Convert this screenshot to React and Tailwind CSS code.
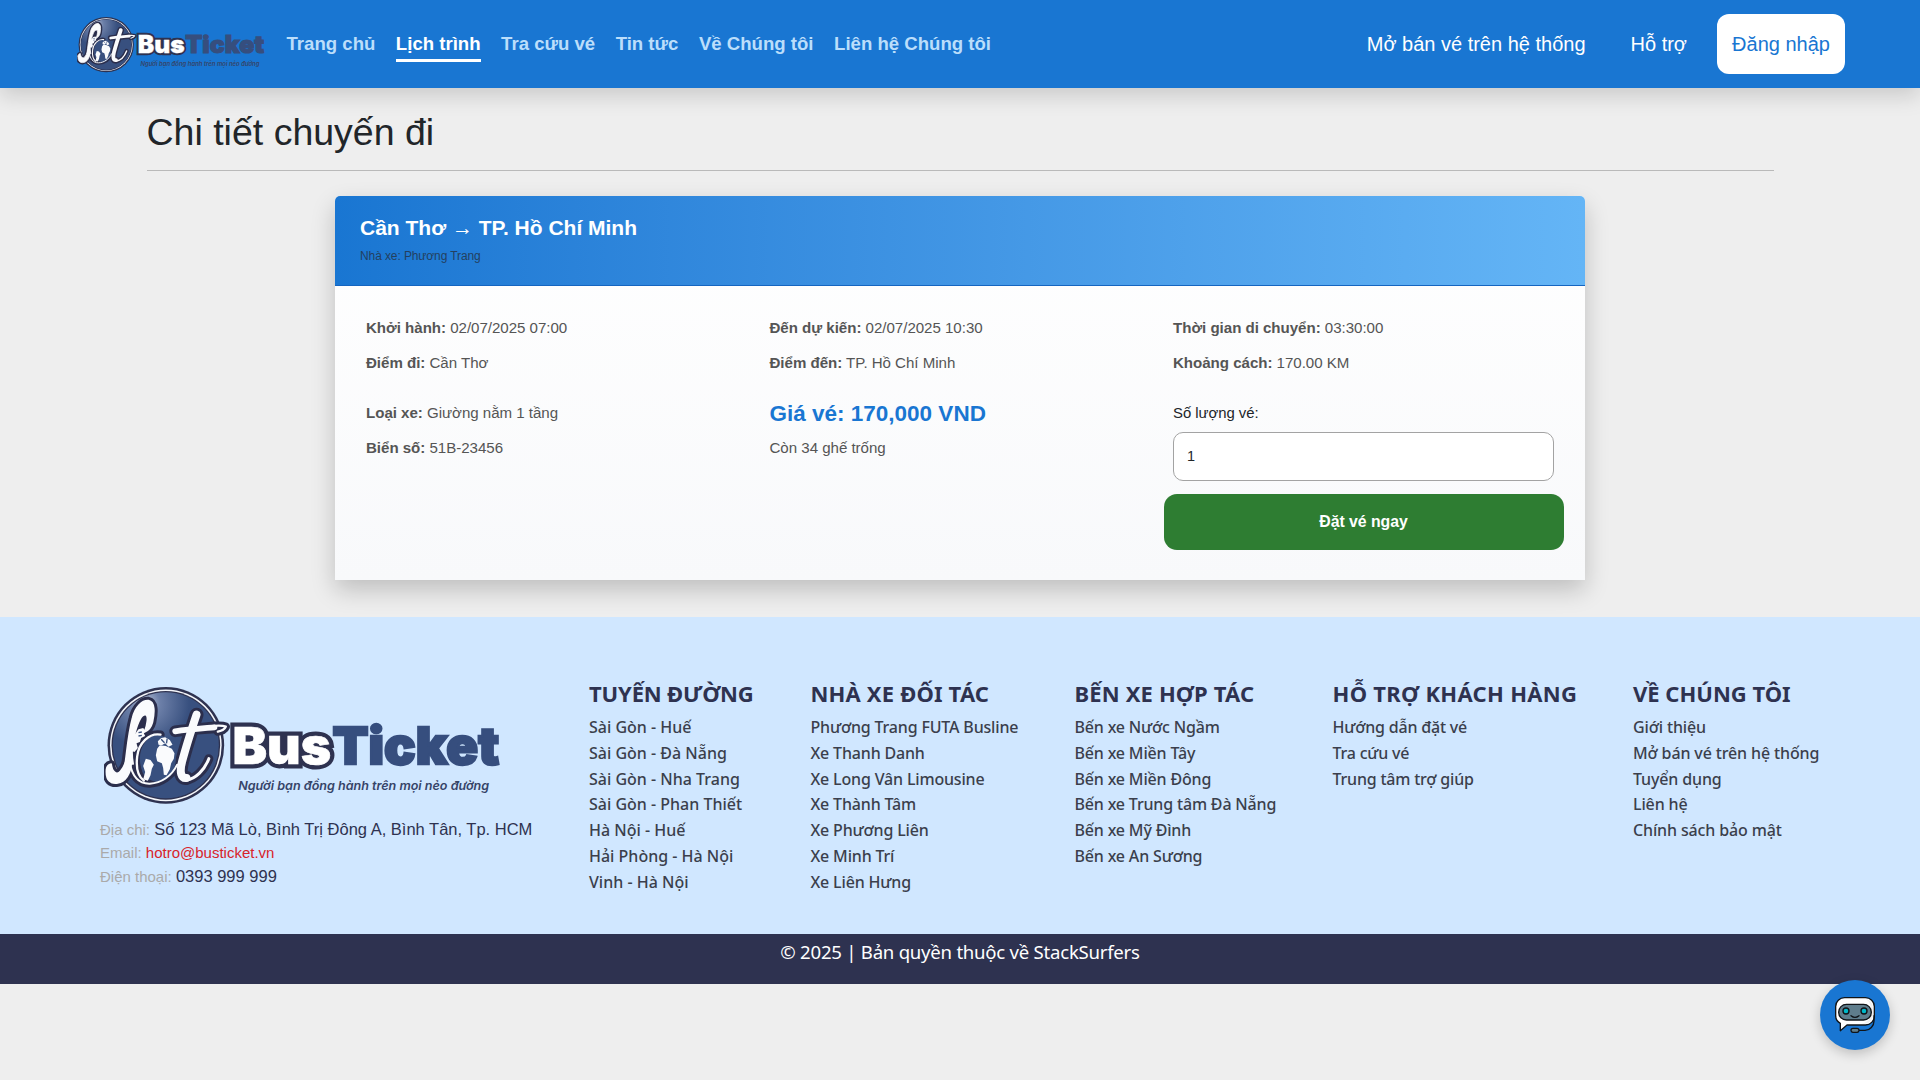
import React from "react";

const NAV = ["Trang chủ", "Lịch trình", "Tra cứu vé", "Tin tức", "Về Chúng tôi", "Liên hệ Chúng tôi"];

const COLUMNS = [
  {
    title: "TUYẾN ĐƯỜNG",
    width: "w-[221.5px]",
    head: "tracking-[-0.15px]",
    body: "tracking-[0px]",
    items: ["Sài Gòn - Huế", "Sài Gòn - Đà Nẵng", "Sài Gòn - Nha Trang", "Sài Gòn - Phan Thiết", "Hà Nội - Huế", "Hải Phòng - Hà Nội", "Vinh - Hà Nội"],
  },
  {
    title: "NHÀ XE ĐỐI TÁC",
    width: "w-[264px]",
    head: "tracking-[0.17px]",
    body: "tracking-[-0.17px]",
    items: ["Phương Trang FUTA Busline", "Xe Thanh Danh", "Xe Long Vân Limousine", "Xe Thành Tâm", "Xe Phương Liên", "Xe Minh Trí", "Xe Liên Hưng"],
  },
  {
    title: "BẾN XE HỢP TÁC",
    width: "w-[258px]",
    head: "tracking-[0.15px]",
    body: "tracking-[-0.17px]",
    items: ["Bến xe Nước Ngầm", "Bến xe Miền Tây", "Bến xe Miền Đông", "Bến xe Trung tâm Đà Nẵng", "Bến xe Mỹ Đình", "Bến xe An Sương"],
  },
  {
    title: "HỖ TRỢ KHÁCH HÀNG",
    width: "w-[300.5px]",
    head: "tracking-[0.3px]",
    body: "tracking-[-0.2px]",
    items: ["Hướng dẫn đặt vé", "Tra cứu vé", "Trung tâm trợ giúp"],
  },
  {
    title: "VỀ CHÚNG TÔI",
    width: "w-[200px]",
    head: "tracking-[0px]",
    body: "tracking-[-0.13px]",
    items: ["Giới thiệu", "Mở bán vé trên hệ thống", "Tuyển dụng", "Liên hệ", "Chính sách bảo mật"],
  },
];

function Script({ stroke, extra }) {
  const p = { fill: "none", stroke, strokeLinecap: "round", strokeLinejoin: "round" };
  return (
    <g>
      {/* hook and tall loop */}
      <path {...p} strokeWidth={5 + extra} fill={stroke} d="M50 300 C47 335 64 344 84 341 C106 338 122 314 124 284 L118 236 C114 262 104 292 92 306 C80 320 66 306 64 284 C54 286 51 292 50 300 Z" />
      <path {...p} strokeWidth={5 + extra} fill={stroke} d="M106 284 C112 240 116 190 128 146 C136 112 158 92 176 94 C196 98 194 130 188 158 C184 174 174 184 164 188 C172 168 178 136 166 136 C152 136 144 160 136 188 C126 222 124 254 130 284 Z" />
      {/* ring in front of the globe */}
      <path {...p} strokeWidth={6 + extra} d="M118 270 C124 316 144 344 180 343 C214 342 246 320 262 286" />
      <path {...p} strokeWidth={7 + extra} d="M212 196 C178 190 146 222 142 262 C138 296 146 322 162 334" />
      {/* letter t */}
      <path {...p} strokeWidth={24 + extra} d="M320 136 C306 178 290 226 277 276 C268 310 274 328 290 326" />
      <path {...p} strokeWidth={9 + extra} d="M290 332 C318 328 344 302 357 268" />
      <path {...p} strokeWidth={17 + extra} d="M256 186 C296 180 340 177 374 174" />
      <path {...p} strokeWidth={7 + extra} d="M360 171 C384 168 398 168 408 172 C404 182 396 184 384 187" />
    </g>
  );
}

function Logo({ id, className }) {
  return (
    <svg viewBox="43 47 1190 360" className={className} aria-label="BusTicket">
      <defs>
        <radialGradient id={id} cx="0.3" cy="0.1" r="0.42">
          <stop offset="0" stopColor="#b9c3d8" />
          <stop offset="0.35" stopColor="#6c7fa8" />
          <stop offset="1" stopColor="#38507f" />
        </radialGradient>
      </defs>
      <circle cx="228" cy="228" r="175" fill="#2e3250" />
      <circle cx="228" cy="228" r="167.5" fill="#f4f6fa" />
      <circle cx="228" cy="228" r="163" fill="#2e3250" />
      <circle cx="228" cy="228" r="159" fill={`url(#${id})`} />
      <Script stroke="#2b2e4c" extra={18} />
      <path fill="#2b2e4c" d="M128 284 C128 220 142 160 170 136 C180 160 166 190 166 200 C150 220 140 250 140 300 Z" />
      <ellipse cx="204" cy="268" rx="54" ry="70" fill="#38507f" />
      <g fill="#fafbfd">
        <path d="M134 196 L146 180 L160 176 L168 186 L162 192 L166 200 L154 206 L150 218 L140 222 L144 236 L134 248 L124 244 L122 216 Z" />
        <path d="M168 268 L182 272 L192 286 L186 298 L182 318 L174 334 L160 330 L166 308 L160 290 Z" />
        <path d="M202 238 L210 228 L228 230 L246 238 L254 252 L252 268 L244 282 L240 300 L230 318 L222 316 L220 296 L216 282 L202 276 L198 258 Z" />
        <path d="M204 216 L214 206 L226 204 L240 212 L248 226 L236 232 L226 222 L216 228 L206 226 Z" />
      </g>
      <path d="M214 210 L224 220 M232 208 L230 222 M146 190 L156 188 M146 200 L156 198" stroke="#38507f" strokeWidth="4" />
      <Script stroke="#fafbfd" extra={0} />
      <g fontFamily="Inter, 'Liberation Sans', sans-serif">
        <text x="428" y="283" fontSize="152" fontWeight="900" textLength="296" lengthAdjust="spacingAndGlyphs" fill="#2e3250" stroke="#2e3250" strokeWidth="27" strokeLinejoin="miter">Bus</text>
        <text x="428" y="283" fontSize="152" fontWeight="900" textLength="296" lengthAdjust="spacingAndGlyphs" fill="#ffffff" stroke="#ffffff" strokeWidth="2">Bus</text>
        <text x="728" y="283" fontSize="152" fontWeight="900" textLength="500" lengthAdjust="spacingAndGlyphs" fill="#364e7e" stroke="#364e7e" strokeWidth="7">Ticket</text>
        <text x="445" y="361" fontSize="37" fontWeight="600" fontStyle="italic" textLength="753" lengthAdjust="spacingAndGlyphs" fill="#364468">Người bạn đồng hành trên mọi nẻo đường</text>
      </g>
    </svg>
  );
}

function Header() {
  return (
    <header className="relative z-10 flex h-[88px] items-center bg-[#1976d2] pr-[75px] pl-[77px] shadow-[0_8px_20px_rgba(0,0,0,0.15)]">
      <Logo id="logo-shine-top" className="h-[57px] w-[188px] shrink-0" />
      <nav className="ml-[21.5px] flex gap-[20.5px] pb-px text-[18.6px] leading-7 font-bold text-[#bbdefb]">
        {NAV.map((label) =>
          label === "Lịch trình" ? (
            <a key={label} className="relative text-white">
              {label}
              <span className="absolute inset-x-0 top-[29px] h-[3px] bg-white" />
            </a>
          ) : (
            <a key={label}>{label}</a>
          )
        )}
      </nav>
      <div className="ml-auto flex items-center text-[20px] leading-7 text-white">
        <a className="mr-[45px]">Mở bán vé trên hệ thống</a>
        <a className="mr-[30px]">Hỗ trợ</a>
        <button className="h-[60px] w-[128px] rounded-[12px] bg-white text-[#1976d2]">Đăng nhập</button>
      </div>
    </header>
  );
}

function Info({ label, children }) {
  return (
    <p>
      <b>{label}</b> {children}
    </p>
  );
}

function TripCard() {
  return (
    <section className="mx-auto mt-[25px] h-[384px] w-[1250px] rounded-t-[5px] bg-linear-to-b from-white to-[#f8f9fb] shadow-[0_10px_25px_rgba(0,0,0,0.2)]">
      <div className="h-[90px] rounded-t-[5px] border-b border-[#1565c0] bg-linear-to-r from-[#1976d2] to-[#64b5f6] px-[25px] pt-[17px]">
        <h2 className="text-[21px] leading-[30px] font-bold text-white">Cần Thơ → TP. Hồ Chí Minh</h2>
        <p className="mt-[4px] text-[12px] leading-[18px] tracking-[-0.1px] text-[#23405f]">Nhà xe: Phương Trang</p>
      </div>
      <div className="grid grid-cols-[403.5px_403.5px_381px] pt-[23.5px] pl-[31px] text-[15.1px] leading-[35px] tracking-[-0.03px] text-[#555]">
        <div>
          <Info label="Khởi hành:">02/07/2025 07:00</Info>
          <Info label="Điểm đi:">Cần Thơ</Info>
        </div>
        <div>
          <Info label="Đến dự kiến:">02/07/2025 10:30</Info>
          <Info label="Điểm đến:">TP. Hồ Chí Minh</Info>
        </div>
        <div>
          <Info label="Thời gian di chuyển:">03:30:00</Info>
          <Info label="Khoảng cách:">170.00 KM</Info>
        </div>
        <div className="pt-[15px]">
          <Info label="Loại xe:">Giường nằm 1 tầng</Info>
          <Info label="Biển số:">51B-23456</Info>
        </div>
        <div className="pt-[15px]">
          <p className="pt-[3px] text-[22.5px] leading-[32px] font-bold tracking-normal text-[#1976d2]">Giá vé: 170,000 VND</p>
          <p>Còn 34 ghế trống</p>
        </div>
        <div className="pt-[15px]">
          <label className="block pt-px text-[14.9px] leading-[34px] text-[#212529]">Số lượng vé:</label>
          <div className="mt-[2.5px] h-[49px] w-[381px] rounded-[10px] border border-[#a3a3a3] bg-white px-[13px] text-[14.5px] leading-[47px] text-[#212529]">1</div>
          <button className="mt-[13px] -ml-[9.5px] block h-[56px] w-[400px] rounded-[13px] bg-[#2e7d32] text-center text-[15.8px] leading-[52px] font-bold text-white">Đặt vé ngay</button>
        </div>
      </div>
    </section>
  );
}

function Footer() {
  return (
    <footer>
      <div className="flex h-[317px] bg-[#d0e7ff] pl-[100px]">
        <div className="w-[489px] pt-[68px] text-[16.5px] leading-[23.5px] text-[#2e3250]">
          <Logo id="logo-shine-foot" className="ml-[4px] h-[120px] w-[397px]" />
          <p className="mt-[12.5px]"><span className="text-[15px] text-[#aaa]">Địa chỉ: </span>Số 123 Mã Lò, Bình Trị Đông A, Bình Tân, Tp. HCM</p>
          <p className="text-[15px] text-[#d8232a]"><span className="text-[#aaa]">Email: </span>hotro@busticket.vn</p>
          <p><span className="text-[15px] text-[#aaa]">Điện thoại: </span>0393 999 999</p>
        </div>
        <div className="flex pt-[62px] font-['Noto_Sans',sans-serif]">
          {COLUMNS.map((c) => (
            <div key={c.title} className={c.width}>
              <h3 className={`text-[22px] leading-7 font-bold whitespace-nowrap text-[#2e3250] ${c.head}`}>{c.title}</h3>
              <ul className={`mt-[8px] text-[16px] leading-[25.8px] font-medium whitespace-nowrap text-[#3b3f4c] ${c.body}`}>
                {c.items.map((t) => (
                  <li key={t}>{t}</li>
                ))}
              </ul>
            </div>
          ))}
        </div>
      </div>
      <div className="h-[50px] bg-[#2e3250] pt-[4px] text-center font-['Noto_Sans',sans-serif] text-[18.6px] leading-[28px] tracking-[-0.25px] text-white">
        © 2025 | Bản quyền thuộc về StackSurfers
      </div>
    </footer>
  );
}

function ChatButton() {
  return (
    <button className="fixed right-[30px] bottom-[30px] z-20 flex size-[70px] items-center justify-center rounded-full bg-[#1976d2] shadow-[0_4px_12px_rgba(0,0,0,0.2)]">
      <svg viewBox="0 0 120 110" className="h-[36.7px] w-[40px]" fill="none" stroke="#101418" strokeWidth="4" strokeLinejoin="round" strokeLinecap="round">
        <path fill="#fff" d="M30 2 H90 A27 27 0 0 1 118 30 V54 A27 27 0 0 1 90 84 H36 L16 101 V79 A27 27 0 0 1 2 54 V30 A27 27 0 0 1 30 2 Z" />
        <path fill="#f0f0f0" stroke="none" d="M88 6 A26 26 0 0 1 114 32 V54 A26 26 0 0 1 88 80 H78 C96 76 106 66 106 50 V30 C106 16 98 8 88 6 Z" />
        <rect x="11" y="22" width="98" height="47" rx="23.5" fill="#5f7d8c" />
        <circle cx="33" cy="42" r="9" fill="#00b8c8" />
        <circle cx="87" cy="42" r="9" fill="#00b8c8" />
        <path d="M48 56 Q60 66 72 56" />
        <path d="M117 56 V72 A28 28 0 0 1 90 100 H72" />
        <rect x="48" y="94" width="24" height="12" rx="6" fill="#5f7d8c" />
      </svg>
    </button>
  );
}

export default function App() {
  return (
    <div className="min-h-screen bg-[#eeeeee] font-['Liberation_Sans',sans-serif]">
      <Header />
      <main className="h-[529px] overflow-hidden">
        <div className="mx-auto w-[1627px] border-b border-[#b9b9b9] pt-[19px] pb-[13px]">
          <h1 className="text-[37.5px] leading-[50px] text-[#212529]">Chi tiết chuyến đi</h1>
        </div>
        <TripCard />
      </main>
      <Footer />
      <ChatButton />
    </div>
  );
}
